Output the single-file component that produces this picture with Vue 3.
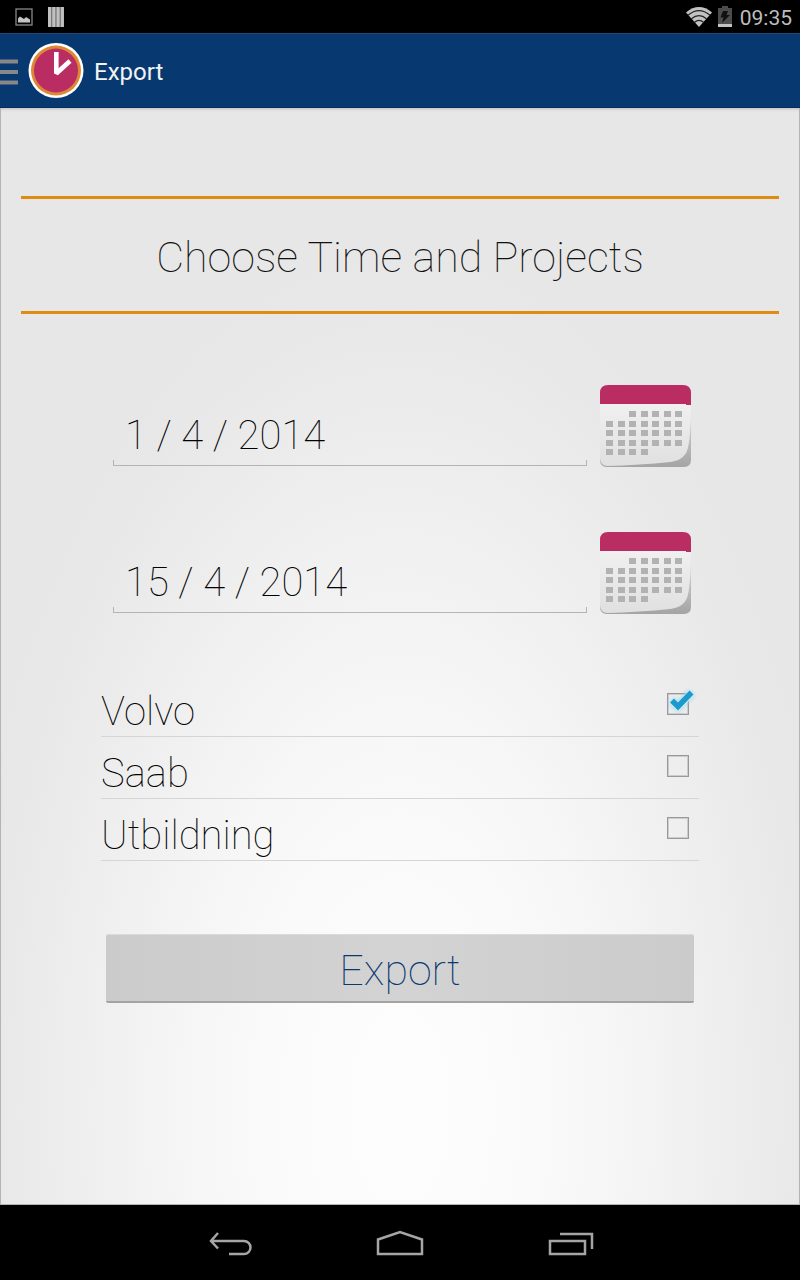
<script setup>
import { ref } from 'vue'

const dates = ref([
  { id: 'from', label: 'From date', value: '1 / 4 / 2014' },
  { id: 'to', label: 'To date', value: '15 / 4 / 2014' },
])

const projects = ref([
  { name: 'Volvo', checked: true },
  { name: 'Saab', checked: false },
  { name: 'Utbildning', checked: false },
])

// First and last filled column for each week of the calendar icon
const weeks = [[2, 6], [0, 6], [0, 6], [0, 6], [0, 3]]
const days = weeks.flatMap(([first, last], row) =>
  Array.from({ length: last - first + 1 }, (_, i) => ({
    x: 6 + Math.round((first + i) * 11.5),
    y: 26 + Math.round(row * 9.6),
  })),
)
</script>

<template>
  <div class="screen">
    <div class="status">
      <svg class="picture" width="18" height="18" viewBox="0 0 18 18" aria-hidden="true">
        <rect x="1" y="1" width="16" height="16" fill="none" stroke="#888" stroke-width="1.3" />
        <path d="M3 14.500V10.500l2-2 2.500 1.500 1.500 1L11 9l4 2.500v3z" fill="#c4c4c4" />
      </svg>
      <svg width="16" height="20" viewBox="0 0 16 20" aria-hidden="true">
        <path d="M0 0H16V20H0z" fill="#777" />
        <path d="M0 0h3v20H0zM4.300 0h3v20h-3zM8.600 0h3v20h-3zM12.900 0h3v20h-3z" fill="#c0c0c0" />
      </svg>
      <svg class="wifi" width="26" height="20" viewBox="0 0 26 20" aria-hidden="true">
        <path d="M0 5.500Q13-5.300 26 5.500L13 20z" fill="#c2c2c2" />
        <path d="M2 8.200Q13-.8 24 8.200M5.500 11.700Q13 5.600 20.500 11.700M8.500 15.200Q13 11.400 17.500 15.200" fill="none" stroke="#222" stroke-width="1.300" />
      </svg>
      <svg class="battery" width="14" height="21" viewBox="0 0 14 21" aria-hidden="true">
        <path d="M4 0h6v2h4v19H0V2h4z" fill="#4c4c4c" />
        <path d="M0 18h14v3H0z" fill="#c2c2c2" />
        <path d="M5 5h5L8.500 9H12L4 17l1.500-5.500H2.500z" fill="#111" />
      </svg>
      <time>09:35</time>
    </div>

    <header class="bar">
      <button class="menu" aria-label="Open menu">
        <svg width="18" height="28" viewBox="0 0 18 28" aria-hidden="true">
          <path d="M0 4.500h18M0 15h18M0 25.500h18" stroke="#888" stroke-width="4" />
        </svg>
      </button>
      <svg width="56" height="56" viewBox="0 0 56 56" aria-hidden="true">
        <circle cx="28" cy="27.500" r="27.500" fill="#fff" />
        <circle cx="28" cy="27.500" r="25" fill="#de8835" />
        <circle cx="28" cy="27.500" r="22" fill="#b92d63" />
        <path d="M28.300 9V30.500L42 18" fill="none" stroke="#fff" stroke-width="4.600" stroke-linejoin="bevel" />
      </svg>
      <h1>Export</h1>
    </header>

    <main class="content">
      <h2>Choose Time and Projects</h2>

      <form @submit.prevent>
        <div class="dates">
          <div v-for="date in dates" :key="date.id" class="date">
            <input :id="date.id" v-model="date.value" type="text" :aria-label="date.label" />
            <button type="button" class="pick" :aria-label="'Pick ' + date.label.toLowerCase()">
              <svg width="92" height="82" viewBox="0 0 92 82" aria-hidden="true">
                <defs>
                  <linearGradient :id="'page-' + date.id" x1="0" y1="0" x2="0" y2="1">
                    <stop offset="0" stop-color="#f0f0f0" />
                    <stop offset="1" stop-color="#e0e0e0" />
                  </linearGradient>
                  <linearGradient :id="'fold-' + date.id" x1="0" y1="0" x2="0" y2="1">
                    <stop offset="0" stop-color="#e0e0e0" />
                    <stop offset="1" stop-color="#a4a4a4" />
                  </linearGradient>
                </defs>
                <path d="M0 19H91V75Q91 82 84 82H7Q0 82 0 75z" :fill="`url(#fold-${date.id})`" />
                <path d="M0 19H91Q91 54 87 66C84 73 78 76 70 77Q40 80 7 81Q0 80 0 73z" :fill="`url(#page-${date.id})`" />
                <path d="M0 19V8Q0 0 8 0H83Q91 0 91 8V20H86V19z" fill="#b92d63" />
                <rect v-for="day in days" :key="day.x + '-' + day.y" :x="day.x" :y="day.y" width="7" height="6" fill="#b2b2b2" />
              </svg>
            </button>
          </div>
        </div>

        <ul>
          <li v-for="project in projects" :key="project.name">
            <label>
              <span>{{ project.name }}</span>
              <span class="tick">
                <input v-model="project.checked" type="checkbox" />
                <svg v-if="project.checked" width="30" height="26" viewBox="0 0 30 26" aria-hidden="true">
                  <path d="M5 11L11 17L24.500 3" fill="none" stroke="#dcebf1" stroke-width="7" />
                  <path d="M5 10.500L11 16.500L24.500 2.500" fill="none" stroke="#1b9bcd" stroke-width="5.500" />
                </svg>
              </span>
            </label>
          </li>
        </ul>

        <button type="submit" class="export">Export</button>
      </form>
    </main>

    <nav class="keys">
      <button aria-label="Back">
        <svg width="48" height="28" viewBox="0 0 48 28" aria-hidden="true">
          <path d="M13 3L6 11L13 18.500M6 11H39a6.500 6.500 0 0 1 0 13H24" />
        </svg>
      </button>
      <button aria-label="Home">
        <svg width="48" height="28" viewBox="0 0 48 28" aria-hidden="true">
          <path d="M2 24V9.500L24 2L46 9.500V24z" />
        </svg>
      </button>
      <button aria-label="Recent apps">
        <svg width="48" height="28" viewBox="0 0 48 28" aria-hidden="true">
          <path d="M3 11H38V24H3zM13 4H45V19" />
        </svg>
      </button>
    </nav>
  </div>
</template>

<style>
body {
  margin: 0;
}
</style>

<style scoped>
.screen {
  display: flex;
  flex-direction: column;
  min-height: 100vh;
  background: #000;
  font-family: Roboto, sans-serif;
}

button {
  padding: 0;
  border: 0;
  background: none;
  font-family: inherit;
  cursor: pointer;
}

svg {
  display: block;
}

.status {
  display: flex;
  align-items: center;
  height: 33px;
  padding: 0 8px 0 15px;
}

.picture {
  margin-right: 15px;
}

.wifi {
  margin-left: auto;
}

.battery {
  margin: 0 8px 0 6px;
}

.status time {
  padding-top: 2px;
  color: #bdbdbd;
  font-size: 21px;
  line-height: 32px;
}

.bar {
  display: flex;
  align-items: center;
  box-sizing: border-box;
  height: 75px;
  border-top: 1px solid #1d4877;
  border-bottom: 1px solid #052f5e;
  background: #073970;
  color: #f2f2f2;
}

.menu {
  margin-right: 10px;
}

.bar h1 {
  margin: 0 0 0 10px;
  padding-top: 2px;
  font-size: 24px;
  font-weight: 400;
  line-height: 32px;
}

.content {
  flex: 1;
  padding: 88px 20px 40px;
  border: 1px solid #b4b4b4;
  border-top: 0;
  background: radial-gradient(ellipse 55% 850px at 50% 91%, #fdfdfd 0%, #fbfbfb 25%, #f7f7f7 45%, #f0f0f0 68%, #e9e9e9 90%, #e7e7e7 100%);
  box-shadow: inset 0 3px 3px -2px #bbb;
}

h2 {
  margin: 0 0 71px;
  padding: 30px 0 26px;
  border: solid #dd8d10;
  border-width: 3px 0;
  color: #111;
  font-size: 43px;
  font-weight: 100;
  line-height: 56px;
  text-align: center;
}

form {
  padding: 0 80px;
}

.dates {
  display: grid;
  grid-template-columns: minmax(0, 1fr);
  gap: 65px;
  margin: 0 7px 61px 12px;
}

.date {
  display: flex;
  align-items: flex-end;
  gap: 13px;
}

.date input {
  flex: 1;
  min-width: 0;
  height: 62px;
  box-sizing: border-box;
  margin: 0 0 1px;
  padding: 0 12px;
  border: 0;
  border-radius: 0;
  background:
    linear-gradient(#b4b4b4, #b4b4b4) left bottom / 100% 1px no-repeat,
    linear-gradient(#b4b4b4, #b4b4b4) left bottom / 1px 6px no-repeat,
    linear-gradient(#b4b4b4, #b4b4b4) right bottom / 1px 6px no-repeat;
  color: #000;
  font-family: inherit;
  font-size: 40px;
  font-weight: 100;
  outline: 0;
}

ul {
  margin: 0 0 73px;
  padding: 0;
  list-style: none;
}

label {
  display: flex;
  align-items: center;
  justify-content: space-between;
  box-sizing: border-box;
  height: 62px;
  padding: 12px 10px 0 0;
  border-bottom: 1px solid #d5d5d5;
  color: #000;
  font-size: 40px;
  font-weight: 100;
  line-height: 48px;
}

.tick {
  position: relative;
  height: 38px;
}

.tick input {
  display: block;
  width: 22px;
  height: 22px;
  margin: 0;
  appearance: none;
  border: 1px solid #999;
  box-shadow: inset 0 0 0 1px #ccc;
}

.tick svg {
  position: absolute;
  top: -3px;
  left: 0;
  filter: drop-shadow(0 0 2px #8fd4f0);
}

.export {
  display: block;
  width: calc(100% - 10px);
  height: 69px;
  margin: 0 5px;
  padding-top: 4px;
  border-top: 1px solid #dadada;
  border-bottom: 2px solid #a3a3a3;
  border-radius: 2px;
  background: linear-gradient(90deg, #cbcbcb, #d3d3d3 50%, #cbcbcb);
  color: #073970;
  font-size: 43px;
  font-weight: 100;
}

.keys {
  display: flex;
  align-items: center;
  justify-content: center;
  gap: 123px;
  box-sizing: border-box;
  height: 75px;
  padding-top: 3px;
}

.keys svg {
  fill: none;
  stroke: #a5a5a5;
  stroke-width: 2.5px;
}
</style>
